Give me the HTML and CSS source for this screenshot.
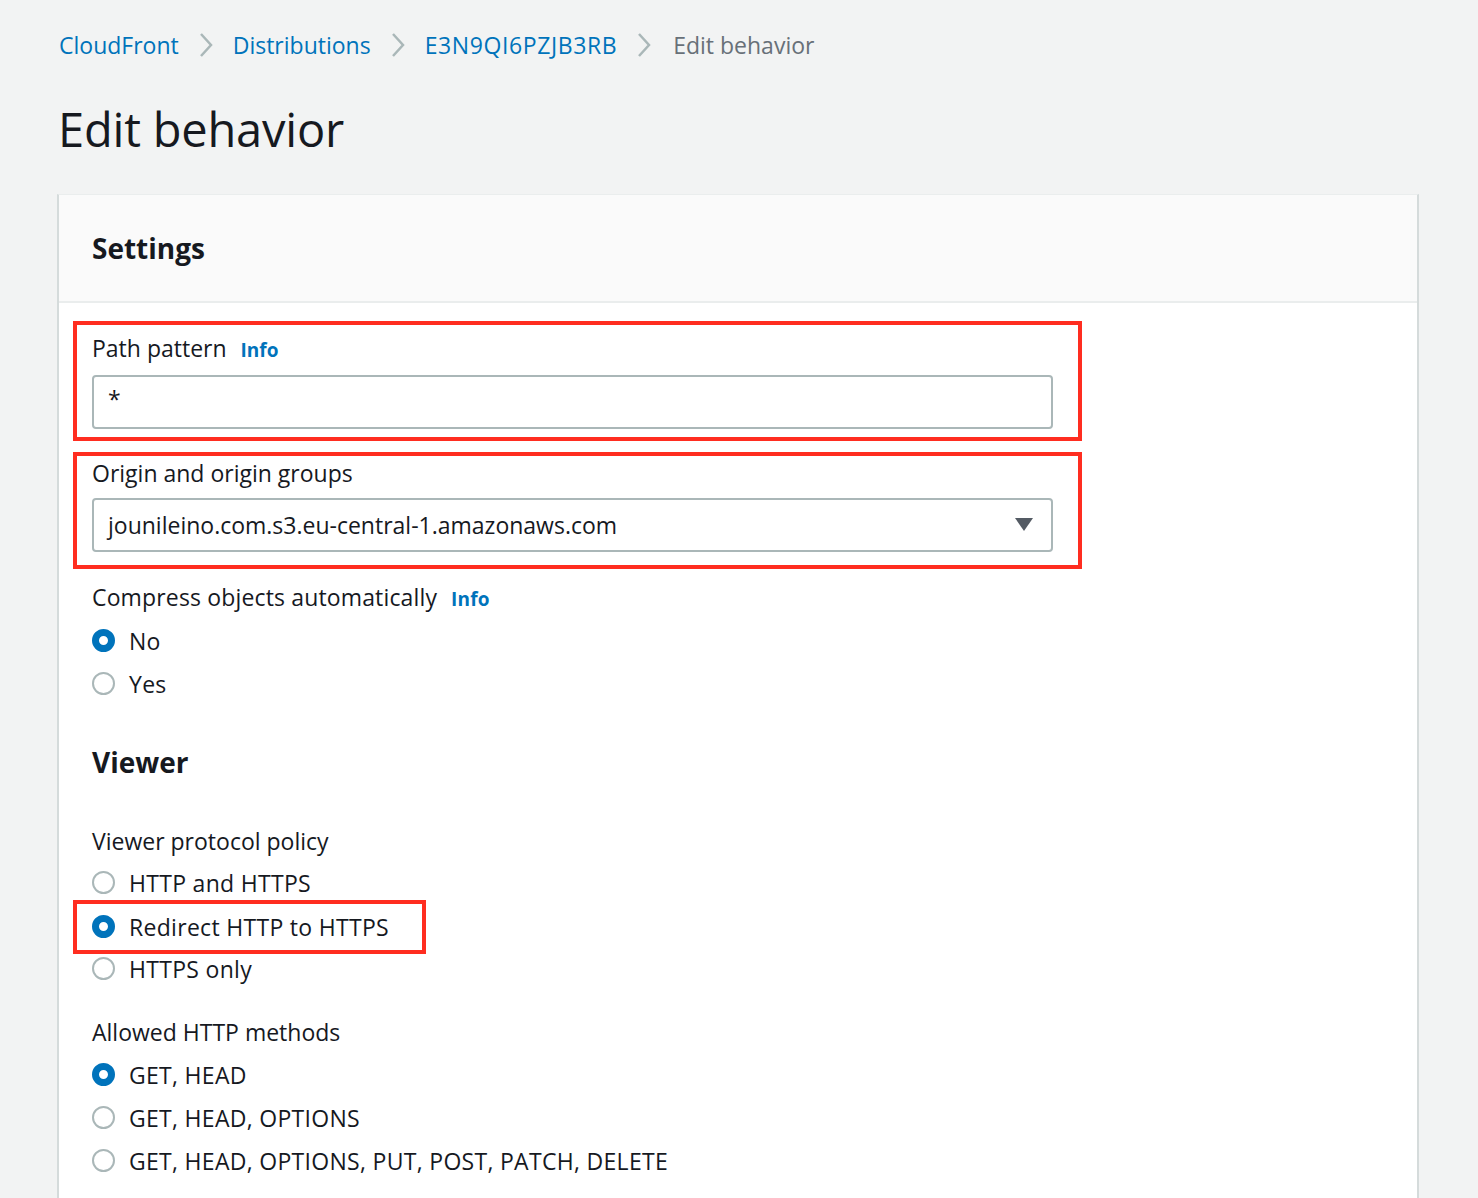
FILE: index.html
```html
<!DOCTYPE html>
<html>
<head>
<meta charset="utf-8">
<link rel="stylesheet" href="styles.css">
</head>
<body>
<div class="page">
  <nav class="breadcrumbs">
    <a class="crumb">CloudFront</a>
    <span class="chev"><svg width="14" height="26" viewBox="0 0 14 26"><path d="M2 2 L12 13 L2 24" fill="none" stroke="#aab7b8" stroke-width="2.5"/></svg></span>
    <a class="crumb">Distributions</a>
    <span class="chev"><svg width="14" height="26" viewBox="0 0 14 26"><path d="M2 2 L12 13 L2 24" fill="none" stroke="#aab7b8" stroke-width="2.5"/></svg></span>
    <a class="crumb">E3N9QI6PZJB3RB</a>
    <span class="chev"><svg width="14" height="26" viewBox="0 0 14 26"><path d="M2 2 L12 13 L2 24" fill="none" stroke="#aab7b8" stroke-width="2.5"/></svg></span>
    <span class="crumb current">Edit behavior</span>
  </nav>
  <h1 class="title">Edit behavior</h1>

  <div class="container">
    <div class="container-header">
      <h2 class="section-title">Settings</h2>
    </div>
    <div class="container-body">
      <div class="mark mark-wide mark-first">
        <div class="label">Path pattern <span class="info">Info</span></div>
        <div class="input">*</div>
      </div>
      <div class="mark mark-wide mark-second">
        <div class="label">Origin and origin groups</div>
        <div class="input select">jounileino.com.s3.eu-central-1.amazonaws.com
          <svg class="caret" width="18" height="14" viewBox="0 0 18 14"><path d="M0 0 H18 L9 13 Z" fill="#545b64"/></svg>
        </div>
      </div>

      <div class="field compress">
        <div class="label">Compress objects automatically <span class="info">Info</span></div>
        <div class="radios">
          <div class="radio"><span class="dot checked"></span>No</div>
          <div class="radio"><span class="dot"></span>Yes</div>
        </div>
      </div>

      <h2 class="section-title viewer">Viewer</h2>

      <div class="field protocol">
        <div class="label">Viewer protocol policy</div>
        <div class="radios">
          <div class="radio"><span class="dot"></span>HTTP and HTTPS</div>
          <div class="mark mark-radio"><div class="radio"><span class="dot checked"></span>Redirect HTTP to HTTPS</div></div>
          <div class="radio"><span class="dot"></span>HTTPS only</div>
        </div>
      </div>

      <div class="field methods">
        <div class="label">Allowed HTTP methods</div>
        <div class="radios">
          <div class="radio"><span class="dot checked"></span>GET, HEAD</div>
          <div class="radio"><span class="dot"></span>GET, HEAD, OPTIONS</div>
          <div class="radio"><span class="dot"></span>GET, HEAD, OPTIONS, PUT, POST, PATCH, DELETE</div>
        </div>
      </div>
    </div>
  </div>
</div>
</body>
</html>
```

FILE: styles.css
```css
* { box-sizing: border-box; }
html, body { margin: 0; padding: 0; }
body {
  background: #f2f3f3;
  font-family: "Open Sans", "Liberation Sans", sans-serif;
  color: #16191f;
  font-size: 23px;
  overflow: hidden;
  height: 1198px;
}
.page {
  padding: 27px 59px 0 57px;
}
.breadcrumbs {
  display: flex;
  align-items: center;
  gap: 20px;
  padding-left: 2px;
  height: 36px;
  font-size: 23px;
}
.crumb { color: #0073bb; text-decoration: none; }
.crumb.current { color: #687078; margin-left: 2px; }
.chev { display: flex; align-items: center; }
.crumb:nth-child(5) { letter-spacing: 0.6px; }
.title {
  margin: 38px 0 0 1px;
  font-size: 47px;
  font-weight: 400;
  line-height: 56px;
  letter-spacing: -0.2px;
}
.container {
  margin-top: 37px;
  background: #fff;
  border-top: 1px solid #eaeded;
  border-left: 2px solid #d5dbdb;
  border-right: 2px solid #d5dbdb;
  min-height: 1100px;
}
.container-header {
  background: #fafafa;
  height: 108px;
  border-bottom: 2px solid #eaeded;
  display: flex;
  align-items: center;
  padding-left: 33px;
}
.section-title {
  margin: 0;
  font-size: 28px;
  font-weight: 700;
  line-height: 34px;
}
.container-body {
  padding: 18px 33px 0 14px;
}
.mark {
  border: 4px solid #ff2d20;
}
.mark-wide {
  width: 1009px;
  padding: 8px 25px 8px 15px;
}
.mark-second { margin-top: 11px; padding-top: 2px; padding-bottom: 13px; }
.label {
  line-height: 30px;
  display: flex;
  align-items: baseline;
}
.info {
  color: #0073bb;
  font-weight: 700;
  font-size: 19px;
  margin-left: 14px;
}
.input {
  margin-top: 10px;
  height: 54px;
  border: 2px solid #aab7b8;
  border-radius: 4px;
  padding: 0 14px;
  display: flex;
  align-items: center;
  font-size: 23px;
}
.mark-first .input { padding-bottom: 6px; }
.input.select { justify-content: space-between; padding-right: 18px; margin-top: 10px; }
.caret { display: block; }
.field { padding-left: 19px; }
.compress { margin-top: 13px; }
.compress .label { letter-spacing: 0.15px; }
.compress .radios { margin-top: 5px; }
.radios { margin-top: 6px; }
.radio {
  display: flex;
  align-items: center;
  height: 43px;
  letter-spacing: 0.3px;
}
.dot {
  width: 23px;
  height: 23px;
  border-radius: 50%;
  border: 2px solid #aab7b8;
  margin-right: 14px;
  flex: none;
}
.dot.checked {
  border: 7px solid #0073bb;
  background: #fff;
}
.viewer { margin: 40px 0 0 19px; }
.protocol { margin-top: 47px; }
.protocol .radios { margin-top: 5px; }
.mark-radio {
  display: inline-block;
  margin: -4px 0 -4px -19px;
  padding: 1px 33px 2px 15px;
}
.mark-radio + .radio { margin-top: -3px; }
.methods { margin-top: 27px; }
```
